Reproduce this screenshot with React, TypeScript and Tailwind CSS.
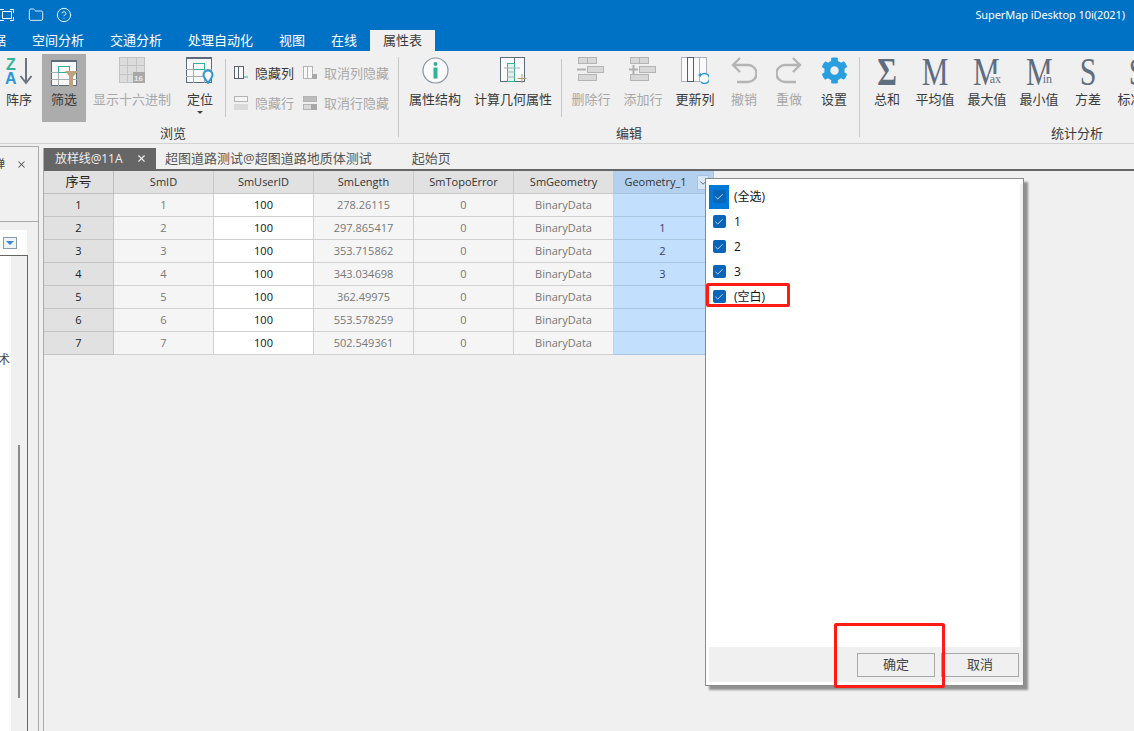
import { Check, ChevronDown, CircleHelp, Folder, X } from "lucide-react";
import { FaCog } from "react-icons/fa";
import type { ReactNode } from "react";

const menuTabs = ["空间分析", "交通分析", "处理自动化", "视图", "在线"];
const columns = ["SmID", "SmUserID", "SmLength", "SmTopoError", "SmGeometry"];
const rows = [
  { id: 1, len: "278.26115", geo: "" },
  { id: 2, len: "297.865417", geo: "1" },
  { id: 3, len: "353.715862", geo: "2" },
  { id: 4, len: "343.034698", geo: "3" },
  { id: 5, len: "362.49975", geo: "" },
  { id: 6, len: "553.578259", geo: "" },
  { id: 7, len: "502.549361", geo: "" },
];
const filterItems = ["(全选)", "1", "2", "3", "(空白)"];

const SortIcon = () => (
  <svg width="28" height="28" viewBox="0 0 28 28">
    <text x="1" y="13" fontSize="16" fontWeight="700" fill="#35b09a" fontFamily="Liberation Sans">Z</text>
    <text x="0" y="27" fontSize="16" fontWeight="700" fill="#2b96d8" fontFamily="Liberation Sans">A</text>
    <path d="M21 1v25M15.5 19l5.5 7 5.5-7" fill="none" stroke="#6b7480" strokeWidth="2" />
  </svg>
);

const GridIcon = ({ stroke, accent }: { stroke: string; accent?: string }) => (
  <>
    <rect x="0.5" y="0.5" width="25" height="25" fill="#f8f8f8" stroke={stroke} />
    <path d="M0 12.5h26M0 19.5h26M7.5 6v20M18.5 6v20" stroke="#a8adb3" />
    <path d="M0 1h26" stroke={stroke} strokeWidth="2" />
    {accent && <rect x="7.5" y="6.5" width="11" height="6" fill="#f8f8f8" stroke={accent} />}
  </>
);

const FilterIcon = () => (
  <svg width="27" height="27" viewBox="0 0 27 27">
    <GridIcon stroke="#5c6a7c" accent="#35b09a" />
    <path d="M14 11h13l-5 6v10h-3V17z" fill="#bca37c" />
  </svg>
);

const HexIcon = () => (
  <svg width="27" height="27" viewBox="0 0 27 27">
    <rect x="0.5" y="0.5" width="25" height="25" fill="#dcdcdc" stroke="#c4c4c4" />
    <path d="M0 8.5h26M0 17.5h26M8.5 0v26M17.5 0v26" stroke="#c4c4c4" />
    <rect x="14" y="15" width="12" height="11" fill="#a8a8a8" />
    <text x="15" y="24" fontSize="8" fontWeight="700" fill="#e8e8e8" fontFamily="Liberation Sans">16</text>
  </svg>
);

const LocateIcon = () => (
  <svg width="28" height="27" viewBox="0 0 28 27">
    <GridIcon stroke="#5c6a7c" accent="#35b09a" />
    <path d="M22 26c-3-4-4.5-6-4.5-8a4.5 4.5 0 0 1 9 0c0 2-1.500 4-4.500 8z" fill="#f8f8f8" stroke="#2b96d8" strokeWidth="2" />
  </svg>
);

const ColIcon = ({ active }: { active?: boolean }) => (
  <svg width="14" height="14" viewBox="0 0 14 14">
    <rect x="0.5" y="0.5" width="9" height="12" fill="#f8f8f8" stroke={active ? "#56606e" : "#b4b4b4"} />
    <path d="M4.5 0v13" stroke={active ? "#56606e" : "#b4b4b4"} />
    {active ? <path d="M10 11h4" stroke="#35b09a" /> : <rect x="9" y="8" width="5" height="5" fill="#a8a8a8" />}
  </svg>
);

const RowIcon = ({ filled }: { filled?: boolean }) => (
  <svg width="14" height="14" viewBox="0 0 14 14">
    <rect x="0.5" y="0.5" width="13" height="5" fill={filled ? "#bdbdbd" : "#f4f4f4"} stroke="#b4b4b4" />
    <rect x="0.5" y="8.5" width="13" height="5" fill="#dadada" stroke={filled ? "#b4b4b4" : "#dadada"} />
    {filled && <rect x="8" y="8" width="6" height="6" fill="#a8a8a8" />}
  </svg>
);

const InfoIcon = () => (
  <svg width="27" height="27" viewBox="0 0 27 27">
    <circle cx="13.5" cy="13.5" r="12.5" fill="#fafafa" stroke="#8892a2" strokeWidth="1.2" />
    <circle cx="13.5" cy="7" r="2" fill="#35b09a" />
    <rect x="11.5" y="10.5" width="4" height="11" fill="#35b09a" />
  </svg>
);

const CalcIcon = () => (
  <svg width="27" height="27" viewBox="0 0 27 27">
    <rect x="0.5" y="0.5" width="24" height="24" fill="#fafafa" stroke="#5c6a7c" />
    <path d="M14.5 0v25" stroke="#5c6a7c" />
    <rect x="7.5" y="6.5" width="7" height="18" fill="#e2f2ee" stroke="#35b09a" />
    <path d="M4 11h16M7 15h8M7 20h8" stroke="#a8b0b8" />
    <path d="M22 17v9M17.5 21.5h9" stroke="#b69a70" />
  </svg>
);

const RowEditIcon = ({ plus }: { plus?: boolean }) => (
  <svg width="28" height="24" viewBox="0 0 28 24">
    <rect x="1.5" y="0.5" width="18" height="6" fill="#d8d8d8" stroke="#b4b4b4" />
    <path d="M10.5 0v7M10.5 17v7" stroke="#b4b4b4" />
    <rect x="10.5" y="9.5" width="16" height="6" fill="#d8d8d8" stroke="#b4b4b4" />
    <path d="M0 12.5h9" stroke="#b0b0b0" strokeWidth="2" />
    {plus && <path d="M4.5 8v9" stroke="#b0b0b0" strokeWidth="2" />}
    <rect x="1.5" y="17.5" width="18" height="6" fill="#d8d8d8" stroke="#b4b4b4" />
  </svg>
);

const UpdateColIcon = () => (
  <svg width="28" height="27" viewBox="0 0 28 27">
    <rect x="0.5" y="0.5" width="25" height="24" fill="#fafafa" stroke="#aab2be" />
    <rect x="6.5" y="0.5" width="6" height="24" fill="#fafafa" stroke="#56606e" />
    <path d="M18.5 0v25" stroke="#aab2be" />
    <path d="M20 18a5 5 0 1 1 0 7" fill="#fafafa" stroke="#2b96d8" strokeWidth="1.4" />
    <path d="M17 18l3-2v4z" fill="#2b96d8" />
  </svg>
);

const UndoIcon = () => (
  <svg width="26" height="27" viewBox="0 0 26 27" fill="none" stroke="#b4b4b4" strokeWidth="2.4">
    <path d="M2 8h15a8.500 8.500 0 0 1 0 17H6M9 1L2 8l7 7" />
  </svg>
);

const RedoIcon = () => (
  <svg width="26" height="27" viewBox="0 0 26 27" fill="none" stroke="#b4b4b4" strokeWidth="2.4">
    <path d="M24 8H9a8.500 8.500 0 0 0 0 17h11M17 1l7 7-7 7" />
  </svg>
);

const SerifGlyph = ({ main, sub, bold }: { main: string; sub?: string; bold?: boolean }) => (
  <div className="-mt-[2px] flex h-[27px] items-start text-[#5f6d80] font-['Liberation_Serif',serif]">
    <span className={`origin-top scale-y-[1.3] text-[30px] leading-[26px] ${bold ? "font-bold" : ""}`}>{main}</span>
    {sub && <span className="relative -ml-[11px] mt-[19px] bg-[#f0f0f0] pl-[1px] text-[12px] leading-[11px]">{sub}</span>}
  </div>
);

const Btn = ({ w, icon, label, off }: { w: string; icon: ReactNode; label: string; off?: boolean }) => (
  <div className={`${w} flex h-[73px] shrink-0 flex-col items-center pt-[6px]`}>
    <div className="flex h-[30px] items-start justify-center">{icon}</div>
    <span className={`mt-[3px] whitespace-nowrap text-[13px] leading-[18px] ${off ? "text-[#a8a8a8]" : "text-[#3a3a3a]"}`}>{label}</span>
  </div>
);

const Small = ({ icon, label, off }: { icon: ReactNode; label: string; off?: boolean }) => (
  <div className="flex h-[18px] items-center gap-[7px]">
    {icon}
    <span className={`whitespace-nowrap text-[13px] leading-[18px] ${off ? "text-[#a8a8a8]" : "text-[#3a3a3a]"}`}>{label}</span>
  </div>
);

const Sep = () => <div className="mt-[8px] h-[58px] w-px shrink-0 bg-[#c8c8c8]" />;

const Ribbon = () => (
  <div className="flex h-[93px] shrink-0 border-b border-[#d2d2d2] bg-[#f0f0f0]">
    {/* 浏览 */}
    <div className="flex w-[398px] shrink-0 flex-col">
      <div className="flex h-[73px]">
        <Btn w="w-[38px]" icon={<SortIcon />} label="阵序" />
        <div className="ml-[4px] mt-[3px] flex h-[68px] w-[44px] shrink-0 flex-col items-center bg-[#acacac] pt-[6px]">
          <FilterIcon />
          <span className="mt-[3px] text-[13px] leading-[18px] text-[#3a3a3a]">筛选</span>
        </div>
        <Btn w="w-[92px]" icon={<HexIcon />} label="显示十六进制" off />
        <div className="relative">
          <Btn w="w-[44px]" icon={<LocateIcon />} label="定位" />
          <div className="absolute left-[19px] top-[60px] h-0 w-0 border-x-[3px] border-t-[3px] border-x-transparent border-t-[#444]" />
        </div>
        <div className="w-[3px]" />
        <Sep />
        <div className="ml-[8px] mt-[13px] grid h-[48px] grid-cols-[69px_90px] content-between">
          <Small icon={<ColIcon active />} label="隐藏列" />
          <Small icon={<ColIcon />} label="取消列隐藏" off />
          <Small icon={<RowIcon />} label="隐藏行" off />
          <Small icon={<RowIcon filled />} label="取消行隐藏" off />
        </div>
      </div>
      <div className="pr-[52px] text-center text-[13px] leading-[18px] text-[#3a3a3a]">浏览</div>
    </div>
    <div className="mt-[6px] h-[80px] w-px shrink-0 bg-[#c8c8c8]" />
    {/* 编辑 */}
    <div className="flex w-[460px] shrink-0 flex-col">
      <div className="flex h-[73px] pl-[6px]">
        <Btn w="w-[60px]" icon={<InfoIcon />} label="属性结构" />
        <Btn w="w-[96px]" icon={<CalcIcon />} label="计算几何属性" />
        <Sep />
        <div className="w-[3px]" />
        <Btn w="w-[52px]" icon={<RowEditIcon />} label="删除行" off />
        <Btn w="w-[52px]" icon={<RowEditIcon plus />} label="添加行" off />
        <Btn w="w-[52px]" icon={<UpdateColIcon />} label="更新列" />
        <Btn w="w-[46px]" icon={<UndoIcon />} label="撤销" off />
        <Btn w="w-[44px]" icon={<RedoIcon />} label="重做" off />
        <Btn w="w-[46px]" icon={<FaCog size={27} color="#2a9fe0" />} label="设置" />
      </div>
      <div className="text-center text-[13px] leading-[18px] text-[#3a3a3a]">编辑</div>
    </div>
    <div className="mt-[6px] h-[80px] w-px shrink-0 bg-[#c8c8c8]" />
    {/* 统计分析 */}
    <div className="flex w-[434px] shrink-0 flex-col">
      <div className="flex h-[73px] pl-[3px]">
        <Btn w="w-[48px]" icon={<SerifGlyph main="Σ" bold />} label="总和" />
        <Btn w="w-[48px]" icon={<SerifGlyph main="M" />} label="平均值" />
        <Btn w="w-[56px]" icon={<SerifGlyph main="M" sub="ax" />} label="最大值" />
        <Btn w="w-[48px]" icon={<SerifGlyph main="M" sub="in" />} label="最小值" />
        <Btn w="w-[50px]" icon={<SerifGlyph main="S" />} label="方差" />
        <Btn w="w-[48px]" icon={<SerifGlyph main="S" />} label="标准差" />
      </div>
      <div className="text-center text-[13px] leading-[18px] text-[#3a3a3a]">统计分析</div>
    </div>
  </div>
);

const LeftPanel = () => (
  <div className="mt-[2px] flex w-[39px] shrink-0 flex-col border-r border-t border-[#ababab]">
    <div className="flex h-[75px] shrink-0 items-start border-b border-[#ababab] pt-[9px]">
      <div className="flex w-[5px] justify-end overflow-hidden text-[11px] leading-[16px] text-[#444]">
        <span className="shrink-0">弹</span>
      </div>
      <X size={11} strokeWidth={2.2} color="#555" className="ml-[11px] mt-[3px]" />
    </div>
    <div className="mt-[8px] flex h-[25px] w-[27px] shrink-0 items-center justify-end bg-white pr-[10px]">
      <div className="flex h-[12px] w-[14px] items-center justify-center border border-[#8a9ab0] bg-[#eef3f8]">
        <div className="h-0 w-0 border-x-[4px] border-t-[4px] border-x-transparent border-t-[#3c86d0]" />
      </div>
    </div>
    <div className="flex min-h-0 w-[28px] flex-1 border-r border-t border-[#666]">
      <div className="w-[11px] shrink-0 overflow-hidden bg-white pt-[95px]">
        <span className="-ml-[2px] block whitespace-nowrap text-[12px] leading-[18px] text-[#444]">术</span>
      </div>
      <div className="flex-1 pl-[7px] pt-[189px]">
        <div className="h-[253px] w-[2px] bg-[#8a8a8a]" />
      </div>
    </div>
  </div>
);

const Cell = ({ children, className }: { children?: ReactNode; className: string }) => (
  <div className={`flex h-[23px] items-center justify-center border-b border-r text-[11px] ${className}`}>{children}</div>
);

const DataTable = () => (
  <div className="grid w-[670px] grid-cols-[70px_repeat(6,100px)]">
    <Cell className="border-[#bdbdbd] bg-[#e1e1e1] text-[13px] text-[#222]">序号</Cell>
    {columns.map((c) => (
      <Cell key={c} className="border-[#c8c8c8] bg-[#e1e1e1] text-[#333]">{c}</Cell>
    ))}
    <div className="relative">
      <Cell className="border-[#a9c4de] bg-[#b3d0ee] pr-[16px] text-[#333]">Geometry_1</Cell>
      <div className="absolute left-[83px] top-[4px] flex h-[15px] w-[12px] items-center justify-center border border-[#a8c6e4] bg-[#d8e8f8]">
        <ChevronDown size={10} color="#555" />
      </div>
    </div>
    {rows.map((r) => (
      <div key={r.id} className="contents">
        <Cell className="border-[#c4c4c4] bg-[#e1e1e1] text-[#222]">{r.id}</Cell>
        <Cell className="border-[#d0d0d0] bg-[#f5f5f5] text-[#777]">{r.id}</Cell>
        <Cell className="border-[#d0d0d0] bg-white text-[#111]">100</Cell>
        <Cell className="border-[#d0d0d0] bg-[#f5f5f5] text-[#777]">{r.len}</Cell>
        <Cell className="border-[#d0d0d0] bg-[#f5f5f5] text-[#777]">0</Cell>
        <Cell className="border-[#d0d0d0] bg-[#f5f5f5] text-[#777]">BinaryData</Cell>
        <Cell className="border-[#a9c4de] bg-[#c2dffe] pl-[1px] pr-[3px] text-[#3b3b78]">{r.geo}</Cell>
      </div>
    ))}
  </div>
);

const FilterPopup = () => (
  <div className="absolute left-[705px] top-[178px] flex h-[508px] w-[319px] flex-col border border-[#8a8a8a] bg-white pl-[3px] pt-[5px] shadow-[4px_4px_2px_rgba(0,0,0,0.4)]">
    <div className="flex flex-1 flex-col border-r-[3px] border-[#f0f0f0]">
      {filterItems.map((item, i) => (
        <div key={item} className="flex h-[25px] items-center">
          <div className={`flex h-[24px] w-[20px] items-center justify-center ${i === 0 ? "bg-[#0078d7]" : ""}`}>
            <div className="flex h-[13px] w-[13px] items-center justify-center rounded-[2px] bg-[#0a64b8]">
              <Check size={10} strokeWidth={2} color="#d8e8f8" />
            </div>
          </div>
          <span className="ml-[5px] text-[12px] text-[#111]">{item}</span>
        </div>
      ))}
    </div>
    <div className="flex h-[35px] shrink-0 items-start justify-end gap-[6px] bg-[#f0f0f0] pr-[4px] pt-[6px]">
      <div className="flex h-[24px] w-[78px] items-center justify-center border border-[#a8a8a8] text-[13px] text-[#444]">确定</div>
      <div className="flex h-[24px] w-[78px] items-center justify-center border border-[#a8a8a8] text-[13px] text-[#444]">取消</div>
    </div>
    <div className="h-[3px] shrink-0 bg-white" />
  </div>
);

export default function App() {
  return (
    <div className="relative flex h-[731px] w-[1134px] flex-col overflow-hidden bg-[#f0f0f0] font-['Open_Sans','Noto_Sans_CJK_SC',sans-serif]">
      <div className="flex h-[30px] shrink-0 items-center justify-between bg-[#0072c6] pr-[9px] text-white">
        <div className="flex items-center">
          <svg width="14" height="14" viewBox="0 0 14 14" fill="none" stroke="#fff">
            <path d="M0 1.500h4M10 1.500h3.500V5M13.500 9v3.500H10M4 12.500H0M2.500 3.500h9v7h-9z" />
          </svg>
          <Folder size={16} strokeWidth={1.3} className="ml-[14px]" />
          <CircleHelp size={16} strokeWidth={1.4} className="ml-[12px]" />
        </div>
        <span className="text-[11px] tracking-[-0.08px] font-['Noto_Sans',sans-serif]">SuperMap iDesktop 10i(2021)</span>
      </div>

      <div className="flex h-[21px] shrink-0 items-center bg-[#0072c6] text-[13px] leading-[21px] text-white">
        <div className="flex w-[19px] justify-end overflow-hidden pr-[13px]"><span className="shrink-0">据</span></div>
        {menuTabs.map((t) => (
          <span key={t} className="px-[13px]">{t}</span>
        ))}
        <span className="bg-[#f0f0f0] px-[13px] text-[#3a3a3a]">属性表</span>
      </div>

      <Ribbon />

      <div className="flex min-h-0 flex-1">
        <LeftPanel />
        <div className="ml-[4px] mt-[4px] flex min-w-0 flex-1 flex-col border-l border-[#ababab]">
          <div className="flex h-[23px] shrink-0 border-b-2 border-[#666] text-[13px] leading-[21px] text-[#555]">
            <div className="flex w-[112px] items-center justify-between bg-[#666] pl-[11px] pr-[9px] text-[#eee]">
              <span className="text-[12px] tracking-[-0.1px]">放样线@11A</span>
              <X size={11} strokeWidth={2.4} color="#eee" />
            </div>
            <span className="ml-[9px]">超图道路测试@超图道路地质体测试</span>
            <span className="ml-[40px]">起始页</span>
          </div>
          <DataTable />
        </div>
      </div>

      <FilterPopup />
      <div className="absolute left-[706px] top-[283px] h-[24px] w-[84px] rounded-[2px] border-[3px] border-[#ff1c14]" />
      <div className="absolute left-[834px] top-[623px] h-[65px] w-[111px] rounded-[2px] border-[3px] border-[#ff1c14]" />
    </div>
  );
}
